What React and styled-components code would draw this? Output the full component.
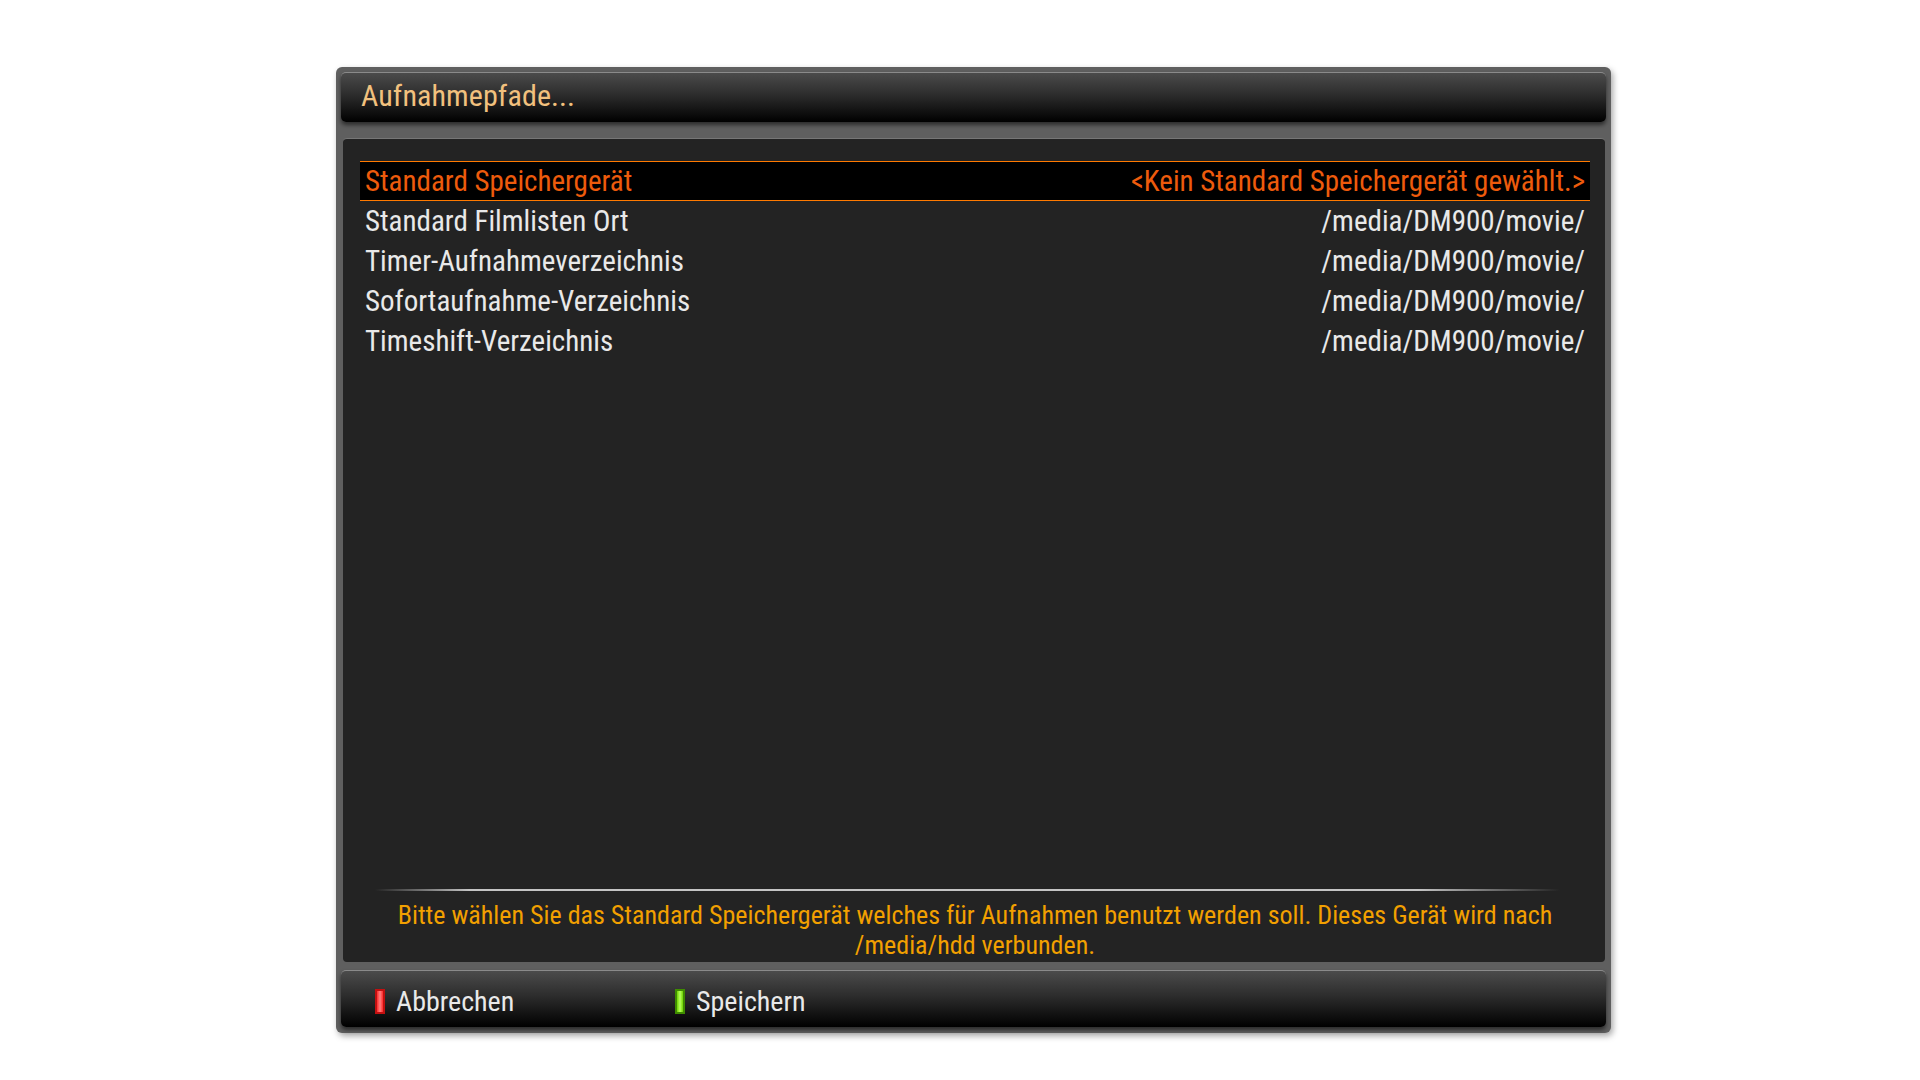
import React from 'react';
import styled, { createGlobalStyle } from 'styled-components';

const GlobalStyle = createGlobalStyle`
  html, body {
    margin: 0;
    padding: 0;
    background: #ffffff;
  }
  * {
    box-sizing: border-box;
  }
`;

const Screen = styled.div`
  width: 1920px;
  height: 1080px;
  padding: 67px 0 0 336px;
  font-family: Roboto, "Noto Sans", sans-serif;
  font-stretch: 87.5%;
`;

const Dialog = styled.div`
  width: 1275px;
  height: 966px;
  display: flex;
  flex-direction: column;
  padding: 5px 5px 6px 5px;
  background: #5f5f5f;
  border-radius: 6px;
  box-shadow: 2px 3px 6px rgba(0, 0, 0, 0.35);
`;

const Bar = styled.div`
  display: flex;
  align-items: center;
  height: ${(p) => p.$height}px;
  padding-left: ${(p) => p.$indent}px;
  padding-top: ${(p) => p.$shift || 0}px;
  padding-bottom: ${(p) => (p.$shift ? 0 : 5)}px;
  border-radius: 5px;
  border-top: 1px solid #8a8a8a;
  background: linear-gradient(to bottom, #4b4b4b 0%, #2c2c2c 45%, #000000 100%);
  box-shadow: 0 3px 4px rgba(0, 0, 0, 0.55);
`;

const Title = styled.div`
  color: #f2c17e;
  font-size: 30px;
  letter-spacing: 0.1px;
`;

const Content = styled.div`
  flex: 1;
  display: flex;
  flex-direction: column;
  margin: 16px 1px 8px 2px;
  padding: 22px 15px 2px 17px;
  background: #232323;
  border-top: 1px solid #767676;
  border-radius: 4px;
`;

const List = styled.div`
  flex: 1;
  display: flex;
  flex-direction: column;
`;

const Row = styled.div`
  height: 40px;
  display: flex;
  align-items: center;
  justify-content: space-between;
  padding: 0 5px 0 5px;
  font-size: 29px;
  color: ${(p) => (p.$selected ? '#ee5b0c' : '#e9e9e9')};
  background: ${(p) => (p.$selected ? '#000000' : 'transparent')};
  border-top: 1px solid ${(p) => (p.$selected ? '#ff7a00' : 'transparent')};
  border-bottom: 1px solid ${(p) => (p.$selected ? '#ff7a00' : 'transparent')};
`;

const Separator = styled.div`
  height: 2px;
  margin: 0 30px 0 15px;
  background: linear-gradient(
    to right,
    rgba(200, 200, 200, 0) 0%,
    #c4c4c4 8%,
    #c4c4c4 88%,
    rgba(200, 200, 200, 0) 100%
  );
`;

const Help = styled.div`
  margin-top: 9px;
  color: #f2a000;
  font-size: 26px;
  line-height: 30px;
  text-align: center;
  padding: 0 20px;
`;

const Button = styled.div`
  width: 300px;
  display: flex;
  align-items: center;
  gap: 11px;
  color: #e9e9e9;
  font-size: 28px;
`;

const Marker = styled.span`
  width: 10px;
  height: 25px;
  border: 2px solid ${(p) => p.$edge};
  background: linear-gradient(to right, ${(p) => p.$fill} 0%, ${(p) => p.$light} 50%, ${(p) => p.$fill} 100%);
`;

const rows = [
  { label: 'Standard Speichergerät', value: '<Kein Standard Speichergerät gewählt.>', selected: true },
  { label: 'Standard Filmlisten Ort', value: '/media/DM900/movie/' },
  { label: 'Timer-Aufnahmeverzeichnis', value: '/media/DM900/movie/' },
  { label: 'Sofortaufnahme-Verzeichnis', value: '/media/DM900/movie/' },
  { label: 'Timeshift-Verzeichnis', value: '/media/DM900/movie/' },
];

export default function App() {
  return (
    <>
      <GlobalStyle />
      <Screen>
        <Dialog>
          <Bar $height={50} $indent={20}>
            <Title>Aufnahmepfade...</Title>
          </Bar>
          <Content>
            <List>
              {rows.map((r) => (
                <Row key={r.label} $selected={r.selected}>
                  <span>{r.label}</span>
                  <span>{r.value}</span>
                </Row>
              ))}
            </List>
            <Separator />
            <Help>
              Bitte wählen Sie das Standard Speichergerät welches für Aufnahmen benutzt werden soll. Dieses Gerät wird nach
              /media/hdd verbunden.
            </Help>
          </Content>
          <Bar $height={57} $indent={34} $shift={4}>
            <Button>
              <Marker $edge="#c21010" $fill="#ff2a2a" $light="#ff8080" />
              Abbrechen
            </Button>
            <Button>
              <Marker $edge="#3f8c00" $fill="#6fd400" $light="#b8ff60" />
              Speichern
            </Button>
          </Bar>
        </Dialog>
      </Screen>
    </>
  );
}
